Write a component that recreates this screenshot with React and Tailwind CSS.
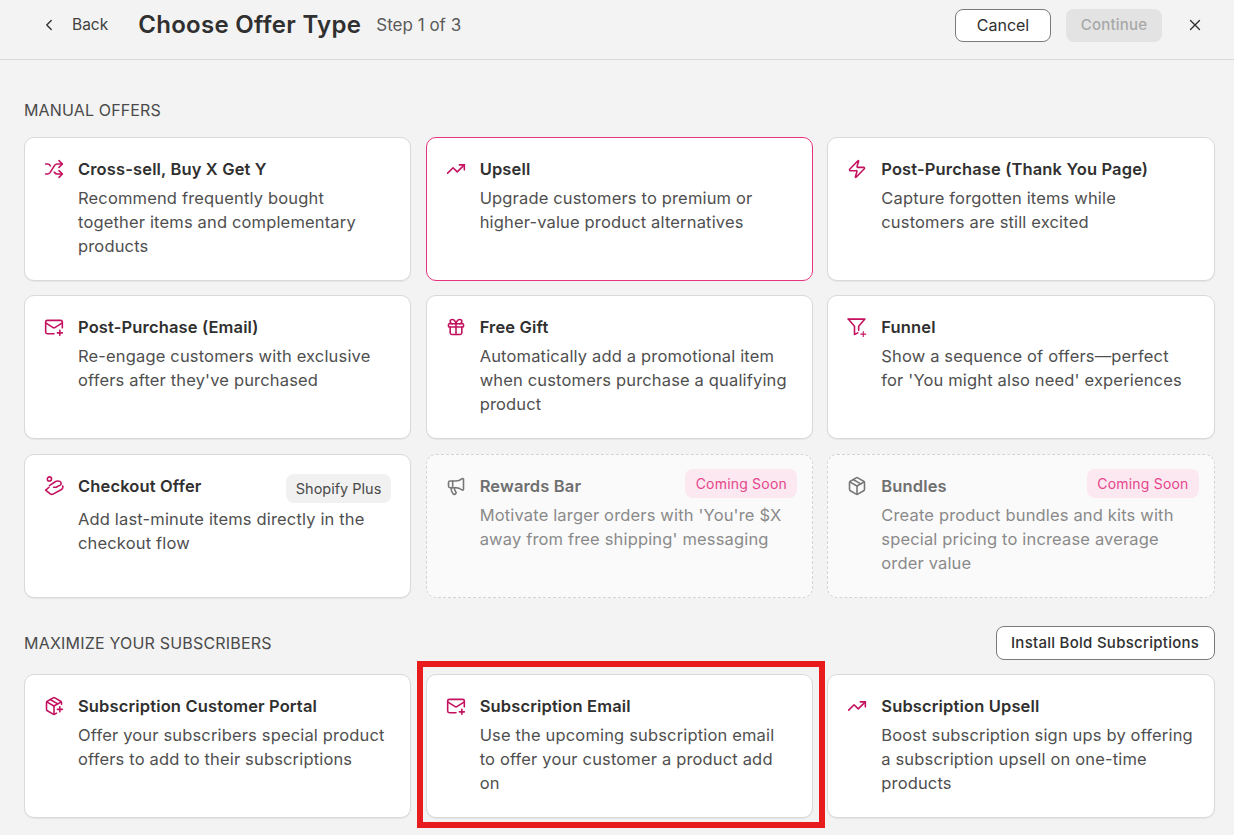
import { ChevronLeft, X, Shuffle, TrendingUp, Zap, MailPlus, Gift, Megaphone, Package, PackagePlus } from 'lucide-react';

const FunnelPlusIcon = ({ className }) => (
  <svg className={className} width="20" height="20" viewBox="0 0 24 24" fill="none" stroke="currentColor" strokeWidth="1.9" strokeLinecap="round" strokeLinejoin="round">
    <path d="M1.500 2.500h20l-7.500 8.500v5" />
    <path d="M1.500 2.500L9 11v10l4-2" />
    <path d="M19.500 17.500v6M16.500 20.500h6" strokeWidth="1.3" />
  </svg>
);

const CheckoutIcon = ({ className }) => (
  <svg className={className} width="20" height="20" viewBox="0 0 24 24" fill="none" stroke="currentColor" strokeWidth="1.9" strokeLinecap="round" strokeLinejoin="round">
    <circle cx="6.500" cy="3.500" r="2.500" />
    <path d="M6.500 11.500l6-4c2-1.400 4.500-2 6.500-1 2 1 2 3.500.5 4.500l-5 2.500h-3" />
    <path d="M6 13.500L2 17l5.500 4.500c1 .7 2.300.7 3.300.2l9.700-5.200c1.500-.8 2.500-2.500 2-4.500" />
  </svg>
);

const manualOffers = [
  { icon: Shuffle, title: 'Cross-sell, Buy X Get Y', text: 'Recommend frequently bought together items and complementary products' },
  { icon: TrendingUp, title: 'Upsell', text: 'Upgrade customers to premium or higher-value product alternatives', selected: true },
  { icon: Zap, title: 'Post-Purchase (Thank You Page)', text: 'Capture forgotten items while customers are still excited' },
  { icon: MailPlus, title: 'Post-Purchase (Email)', text: "Re-engage customers with exclusive offers after they've purchased" },
  { icon: Gift, title: 'Free Gift', text: 'Automatically add a promotional item when customers purchase a qualifying product' },
  { icon: FunnelPlusIcon, title: 'Funnel', text: "Show a sequence of offers—perfect for 'You might also need' experiences" },
  { icon: CheckoutIcon, title: 'Checkout Offer', text: 'Add last-minute items directly in the checkout flow', badge: 'Shopify Plus' },
  { icon: Megaphone, title: 'Rewards Bar', text: "Motivate larger orders with 'You're $X away from free shipping' messaging", soon: true },
  { icon: Package, title: 'Bundles', text: 'Create product bundles and kits with special pricing to increase average order value', soon: true },
];

const subscriberOffers = [
  { icon: PackagePlus, title: 'Subscription Customer Portal', text: 'Offer your subscribers special product offers to add to their subscriptions' },
  { icon: MailPlus, title: 'Subscription Email', text: 'Use the upcoming subscription email to offer your customer a product add on', marked: true },
  { icon: TrendingUp, title: 'Subscription Upsell', text: 'Boost subscription sign ups by offering a subscription upsell on one-time products' },
];

const OfferCard = ({ offer }) => {
  const Icon = offer.icon;
  let cardClass = 'border border-[#d9d9d9] bg-white shadow-[0_1px_1px_rgba(0,0,0,0.06)]';
  if (offer.selected) cardClass = 'border border-[#e6337f] bg-white';
  if (offer.soon) cardClass = 'border border-dashed border-[#d4d4d4] bg-[#fafafa]';

  return (
    <div className={`relative flex h-[144px] gap-[14px] rounded-[10px] pl-[19px] pr-5 pt-[19px] ${cardClass}`}>
      <Icon className={`mt-[2px] shrink-0 ${offer.soon ? 'text-[#777777]' : 'text-[#c4115f]'}`} size={20} strokeWidth={1.9} />
      <div className="min-w-0 flex-1">
        <h3 className={`text-[16.5px] font-semibold leading-6 tracking-[0.14px] ${offer.soon ? 'text-[#6f6f6f]' : 'text-[#303030]'}`}>{offer.title}</h3>
        <p className={`${offer.badge ? 'mt-[9px]' : 'mt-[5px]'} text-[16.5px] leading-6 tracking-[0.16px] ${offer.soon ? 'text-[#8a8a8a]' : 'text-[#4f4f4f]'}`}>{offer.text}</p>
      </div>
      {offer.badge && (
        <span className="absolute right-[19px] top-[19px] rounded-lg bg-[#f1f1f1] px-[10px] py-[3px] text-[14.5px] leading-[23px] text-[#4a4a4a]">{offer.badge}</span>
      )}
      {offer.soon && (
        <span className="absolute right-[14.5px] top-[14px] rounded-lg bg-[#fbe8f1] px-[10.5px] py-[3px] text-[14px] leading-[23px] tracking-[0.2px] text-[#e6458b]">Coming Soon</span>
      )}
    </div>
  );
};

const App = () => {
  return (
    <div className="relative h-[835px] overflow-hidden bg-[#f3f3f3] font-['Inter',sans-serif] text-[#303030]">
      <header className="flex h-[60px] items-center border-b border-[#d9d9d9] pb-[9px] pl-10 pr-[30px]">
        <ChevronLeft size={18} strokeWidth={1.8} className="text-[#303030]" />
        <span className="ml-[14px] text-[15.5px] text-[#404040]">Back</span>
        <h1 className="ml-[30px] text-[24px] font-semibold tracking-[0.3px] text-[#303030]">Choose Offer Type</h1>
        <span className="ml-[15px] pt-px text-[17px] text-[#5a5a5a]">Step 1 of 3</span>
        <div className="ml-auto flex items-center gap-[15px]">
          <button className="h-[33px] w-[96px] rounded-lg border border-[#7a7a7a] bg-white text-[16px] text-[#303030]">Cancel</button>
          <button className="h-[33px] w-[96px] rounded-lg bg-[#e3e3e3] text-[15px] font-medium tracking-[0.2px] text-[#a8a8a8]">Continue</button>
        </div>
        <X size={18} strokeWidth={1.8} className="ml-6 text-[#303030]" />
      </header>

      <main className="pl-6 pr-[19.4px]">
        <h2 className="pt-10 text-[16px] leading-5 tracking-[0.15px] text-[#4a4a4a]">MANUAL OFFERS</h2>
        <div className="mt-[17px] grid grid-cols-3 gap-x-[14.3px] gap-y-[14.4px]">
          {manualOffers.map(offer => <OfferCard key={offer.title} offer={offer} />)}
        </div>

        <div className="mt-7 flex h-[34px] items-center justify-between">
          <h2 className="text-[16px] tracking-[0.2px] text-[#4a4a4a]">MAXIMIZE YOUR SUBSCRIBERS</h2>
          <button className="h-[34px] w-[219px] rounded-lg border border-[#7a7a7a] bg-white text-[15px] font-medium tracking-[0.27px] text-[#303030]">Install Bold Subscriptions</button>
        </div>
        <div className="mt-[14px] grid grid-cols-3 gap-x-[14.3px]">
          {subscriberOffers.map(offer => (
            <div key={offer.title} className="relative">
              <OfferCard offer={offer} />
              {offer.marked && <div className="pointer-events-none absolute -bottom-[10px] -left-[9px] -right-[12px] -top-[13px] border-[6px] border-[#e81c1c]"></div>}
            </div>
          ))}
        </div>
      </main>
    </div>
  );
};

export default App;
